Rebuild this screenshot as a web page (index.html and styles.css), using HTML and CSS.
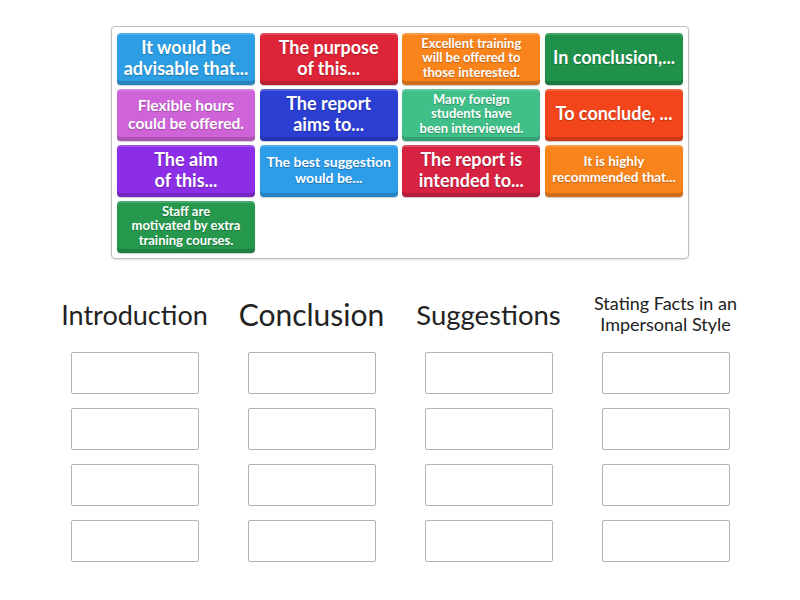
FILE: index.html
```html
<!DOCTYPE html>
<html>
<head>
<meta charset="utf-8">
<link rel="stylesheet" href="styles.css">
</head>
<body>
<div class="page">
  <div class="bank">
    <div class="tile blue fs19">It would be<br>advisable that...</div>
    <div class="tile red fs19">The purpose<br>of this...</div>
    <div class="tile orange fs13">Excellent training<br>will be offered to<br>those interested.</div>
    <div class="tile dgreen fs19">In conclusion,...</div>
    <div class="tile pink fs15">Flexible hours<br>could be offered.</div>
    <div class="tile royal fs19">The report<br>aims to...</div>
    <div class="tile teal fs13">Many foreign<br>students have<br>been interviewed.</div>
    <div class="tile redorange fs19">To conclude, ...</div>
    <div class="tile purple fs19">The aim<br>of this...</div>
    <div class="tile lblue fs14">The best suggestion<br>would be...</div>
    <div class="tile crimson fs19">The report is<br>intended to...</div>
    <div class="tile orange fs13b">It is highly<br>recommended that...</div>
    <div class="tile green fs13">Staff are<br>motivated by extra<br>training courses.</div>
  </div>

  <div class="targets">
    <div class="col">
      <div class="head"><span class="h-intro">Introduction</span></div>
      <div class="slot"></div><div class="slot"></div><div class="slot"></div><div class="slot"></div>
    </div>
    <div class="col">
      <div class="head"><span class="h-concl">Conclusion</span></div>
      <div class="slot"></div><div class="slot"></div><div class="slot"></div><div class="slot"></div>
    </div>
    <div class="col">
      <div class="head"><span class="h-sugg">Suggestions</span></div>
      <div class="slot"></div><div class="slot"></div><div class="slot"></div><div class="slot"></div>
    </div>
    <div class="col">
      <div class="head"><span class="h-facts">Stating Facts in an<br>Impersonal Style</span></div>
      <div class="slot"></div><div class="slot"></div><div class="slot"></div><div class="slot"></div>
    </div>
  </div>
</div>
</body>
</html>
```

FILE: styles.css
```css
html, body {
  margin: 0;
  padding: 0;
  background: #ffffff;
}

.page {
  width: 800px;
  height: 600px;
  padding-top: 26px;
  box-sizing: border-box;
  font-family: Lato, "Noto Sans", sans-serif;
}

.bank {
  width: 578px;
  height: 233px;
  margin: 0 auto;
  box-sizing: border-box;
  border: 1px solid #bdbdbd;
  border-radius: 4px;
  padding: 6px 5px 5px 5px;
  display: grid;
  grid-template-columns: repeat(4, 138px);
  grid-template-rows: repeat(4, 52px);
  column-gap: 4.67px;
  row-gap: 4px;
  box-shadow: 0 1px 2px rgba(0,0,0,0.12);
}

.tile {
  box-sizing: border-box;
  border-radius: 4px;
  display: flex;
  align-items: center;
  justify-content: center;
  text-align: center;
  white-space: nowrap;
  color: #ffffff;
  font-weight: 700;
  padding: 0 2px 3px 2px;
  text-shadow: 0 1px 1px rgba(0,0,0,0.25);
  box-shadow: inset 0 2px 0 rgba(255,255,255,0.18), inset 0 -4px 0 rgba(0,0,0,0.16), 0 1px 1px rgba(0,0,0,0.2);
}

.fs19 { font-size: 18px; line-height: 21px; }
.fs15 { font-size: 15.5px; line-height: 18px; }
.fs14 { font-size: 14px; line-height: 16px; }
.fs13 { font-size: 13px; line-height: 14.5px; }
.fs13b { font-size: 13.5px; line-height: 15.5px; }

.blue { background: #2d9ee3; }
.red { background: #de2537; }
.orange { background: #f9841c; }
.dgreen { background: #1f914a; }
.pink { background: #cf63d8; }
.royal { background: #2c3fd3; }
.teal { background: #40bf89; }
.redorange { background: #f2451c; }
.purple { background: #8c2ee6; }
.lblue { background: #2d9ce9; }
.crimson { background: #d72242; }
.green { background: #26984e; }

.targets {
  width: 708px;
  margin: 30px auto 0 auto;
  display: grid;
  grid-template-columns: repeat(4, 177px);
}

.col {
  display: flex;
  flex-direction: column;
  align-items: center;
}

.head {
  height: 50px;
  display: flex;
  align-items: center;
  justify-content: center;
  text-align: center;
  color: #222222;
  font-weight: 400;
  margin-bottom: 13px;
}

.h-intro { font-size: 27px; }
.h-concl { font-size: 30px; }
.h-sugg { font-size: 27.5px; }
.h-facts { font-size: 18px; line-height: 21px; }

.slot {
  width: 128px;
  height: 42px;
  box-sizing: border-box;
  border: 1px solid #b4b4b4;
  border-radius: 2px;
  margin-bottom: 14px;
  background: #ffffff;
}
```
